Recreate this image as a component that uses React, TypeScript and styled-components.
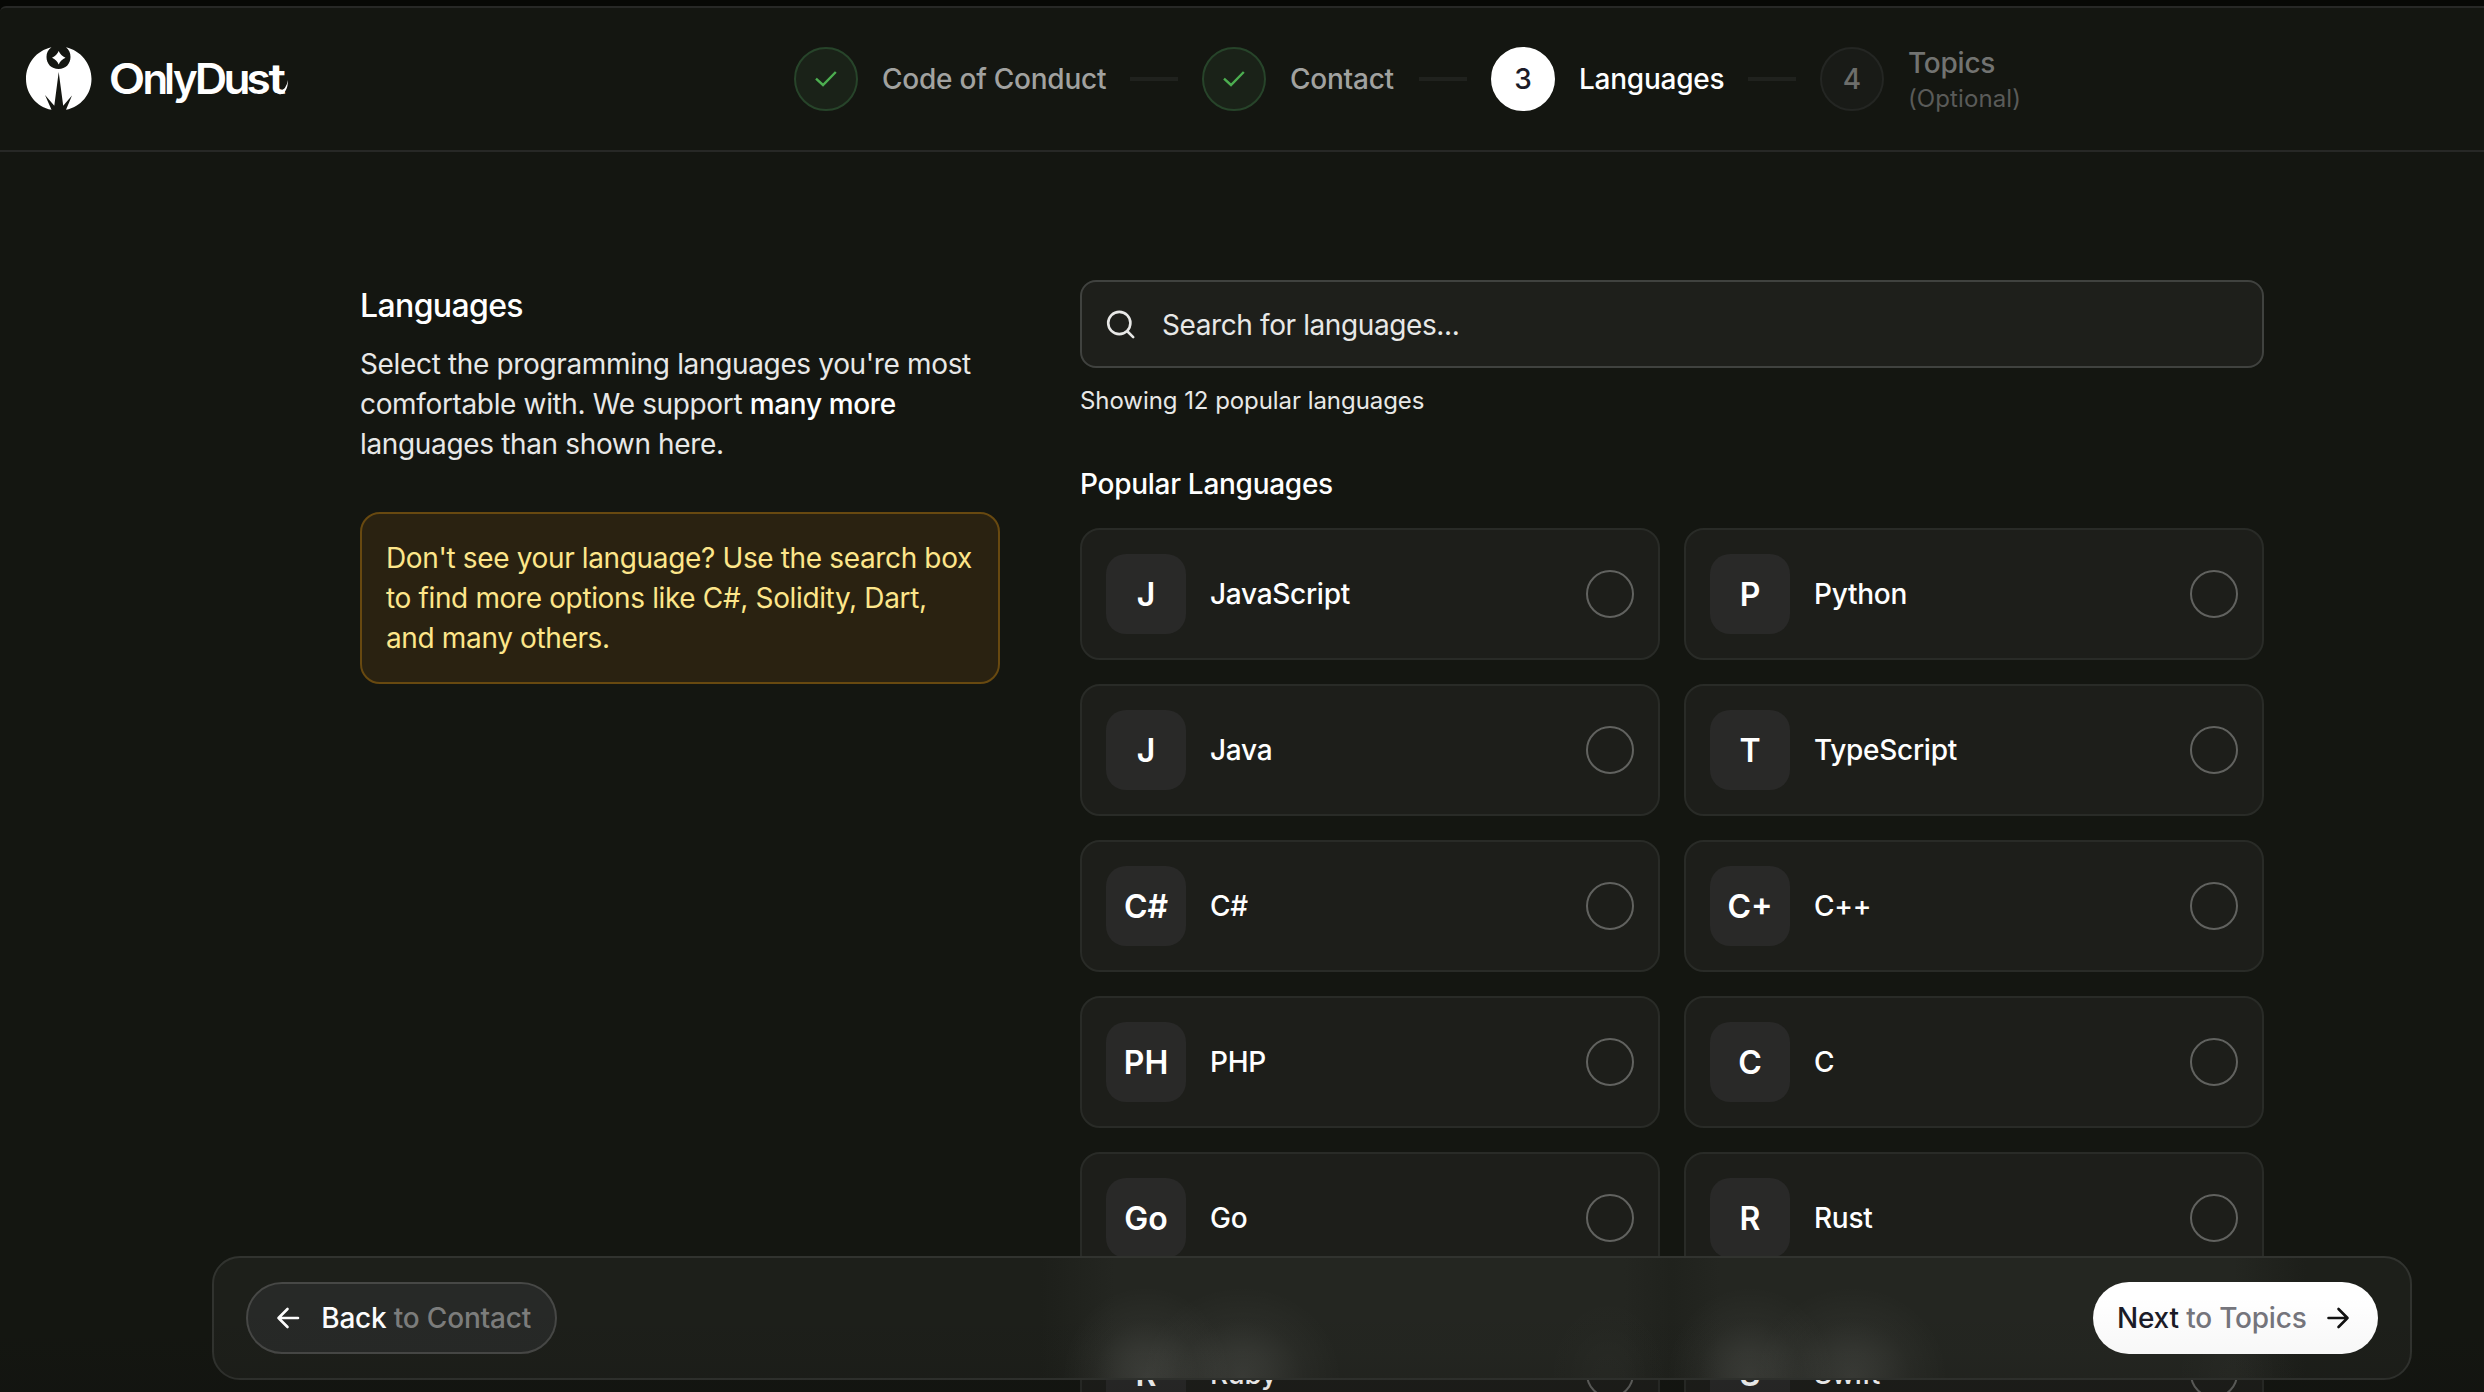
import React from "react";
import styled, { createGlobalStyle } from "styled-components";

const Global = createGlobalStyle`
  *, *::before, *::after { box-sizing: border-box; }
  html, body { margin: 0; background: #070805; }
  body { overflow: hidden; font-family: Inter, "Liberation Sans", sans-serif; color: #fff; -webkit-font-smoothing: antialiased; }
  h1, h2, p { margin: 0; font-weight: 400; }
  button { font: inherit; color: inherit; letter-spacing: inherit; border: 0; background: none; padding: 0; }
`;

const Page = styled.div`
  position: relative;
  width: 2484px;
  height: 1392px;
  padding-top: 6px;
  overflow: hidden;
  background: #070805;
`;

const Shell = styled.div`
  height: 1500px;
  border-top: 2px solid #272826;
  border-top-left-radius: 6px;
  background: #141611;
`;

const Header = styled.header`
  display: flex;
  align-items: center;
  height: 144px;
  padding: 0 24px;
  border-bottom: 2px solid #272826;
`;

const Brand = styled.div`
  width: 770px;
  height: 70px;
  flex: none;
`;

const Stepper = styled.ol`
  display: flex;
  align-items: center;
  gap: 24px;
  margin: 0;
  padding: 0;
  list-style: none;
`;

const Step = styled.li`
  display: flex;
  align-items: center;
  gap: 24px;
`;

type State = "done" | "current" | "todo";
const badge = {
  done: { bg: "#1a2218", border: "#27442a", color: "#4cae50", text: "#a1a2a0" },
  current: { bg: "#fff", border: "#fff", color: "#1b1b27", text: "#fff" },
  todo: { bg: "#191b17", border: "#242623", color: "#6d6e6b", text: "#727371" },
};

const Badge = styled.span<{ $s: State }>`
  display: flex;
  align-items: center;
  justify-content: center;
  width: 64px;
  height: 64px;
  border-radius: 50%;
  border: 2px solid ${(p) => badge[p.$s].border};
  background: ${(p) => badge[p.$s].bg};
  color: ${(p) => badge[p.$s].color};
  font-size: 28px;
  font-weight: 500;
`;

const StepText = styled.span<{ $s: State; $w?: number }>`
  display: flex;
  flex-direction: column;
  width: ${(p) => (p.$w ? p.$w + "px" : "auto")};
  color: ${(p) => badge[p.$s].text};
  font-size: 28px;
  line-height: 40px;
  font-weight: 500;
  letter-spacing: -0.24px;
  white-space: nowrap;
`;

const Optional = styled.small`
  font-size: 24px;
  line-height: 32px;
  padding-bottom: 1px;
  font-weight: 400;
  letter-spacing: 0.1px;
  color: #5a5b59;
`;

const Dash = styled.span`
  width: 48px;
  height: 4px;
  background: #20221e;
`;

const Main = styled.main`
  display: grid;
  grid-template-columns: 640px 1184px;
  column-gap: 80px;
  padding: 128px 360px 0;
`;

const Intro = styled.section`
  padding-top: 4px;
`;

const Title = styled.h1`
  font-size: 32px;
  line-height: 44px;
  font-weight: 500;
  letter-spacing: -0.63px;
`;

const Lead = styled.p`
  margin-top: 16px;
  font-size: 28px;
  line-height: 40px;
  letter-spacing: -0.35px;
  color: #e8e8e7;
  b { font-weight: 500; color: #fff; }
`;

const Tip = styled.p`
  margin-top: 48px;
  padding: 24px;
  border: 2px solid #684910;
  border-radius: 20px;
  background: #2a2211;
  color: #fde68a;
  font-size: 28px;
  line-height: 40px;
  letter-spacing: -0.36px;
`;

const Search = styled.div`
  display: flex;
  align-items: center;
  gap: 26px;
  height: 88px;
  padding: 2px 24px 0;
  border: 2px solid #40423f;
  border-radius: 16px;
  background: #1e1f1b;
  color: #e8e8e7;
  font-size: 28px;
  letter-spacing: -0.4px;
`;

const Count = styled.p`
  margin-top: 17px;
  font-size: 24px;
  line-height: 32px;
  letter-spacing: -0.06px;
  color: #e8e8e7;
`;

const GroupTitle = styled.h2`
  margin-top: 47px;
  font-size: 28px;
  line-height: 40px;
  font-weight: 500;
  letter-spacing: -0.28px;
`;

const Grid = styled.div`
  display: grid;
  grid-template-columns: 1fr 1fr;
  gap: 24px;
  margin-top: 24px;
`;

const Card = styled.button`
  display: flex;
  align-items: center;
  gap: 24px;
  height: 132px;
  padding: 24px;
  border: 2px solid #292b27;
  border-radius: 20px;
  background: #1d1e1a;
  text-align: left;
`;

const Tile = styled.span`
  display: flex;
  align-items: center;
  justify-content: center;
  width: 80px;
  height: 80px;
  border-radius: 20px;
  background: #292928;
  font-size: 32px;
  font-weight: 600;
`;

const Name = styled.span`
  flex: 1;
  font-size: 28px;
  font-weight: 500;
  letter-spacing: -0.28px;
`;

const Radio = styled.span`
  width: 48px;
  height: 48px;
  border: 2px solid #61625f;
  border-radius: 50%;
`;

const glow = (x: number, w: number, alpha: number) =>
  `radial-gradient(${w}px 92px at ${x}px 100%, rgba(255, 255, 250, ${alpha}), rgba(255, 255, 250, ${alpha * 0.72}) 28%, rgba(255, 255, 250, ${alpha * 0.24}) 62%, rgba(255, 255, 250, 0))`;

const Footer = styled.footer`
  position: absolute;
  left: 212px;
  right: 72px;
  bottom: 12px;
  display: flex;
  align-items: center;
  justify-content: space-between;
  height: 124px;
  padding: 0 32px;
  border: 2px solid #31332f;
  border-radius: 28px;
  background:
    ${glow(932, 84, 0.125)},
    ${glow(1028, 100, 0.115)},
    ${glow(1536, 84, 0.115)},
    ${glow(1638, 96, 0.11)},
    ${glow(1394, 70, 0.02)},
    ${glow(2022, 70, 0.02)},
    linear-gradient(to right, #1d1f1a 826px, #242621 900px, #242621 1410px, #20221d 1458px, #242621 1506px, #242621 2020px, #1d1f1a 2092px);
`;

const Action = styled.button<{ $primary?: boolean }>`
  display: flex;
  align-items: center;
  justify-content: space-between;
  width: ${(p) => (p.$primary ? 285 : 311)}px;
  height: 72px;
  padding: ${(p) => (p.$primary ? "0 28px 0 24px" : "0 24px 0 28px")};
  border-radius: 36px;
  border: ${(p) => (p.$primary ? "0" : "2px solid #474846")};
  background: ${(p) => (p.$primary ? "#fff" : "#272927")};
  color: ${(p) => (p.$primary ? "#1b1b27" : "#fff")};
  font-size: 28px;
  font-weight: 500;
  letter-spacing: -0.2px;
  white-space: pre;
  i { font-style: normal; color: ${(p) => (p.$primary ? "#76767d" : "#7d7e7d")}; }
`;

const Shade = styled.div`
  position: absolute;
  inset: auto 0 0 0;
  height: 96px;
  background: linear-gradient(to bottom, rgba(12, 10, 12, 0), rgba(12, 10, 12, 0.03) 60%, rgba(12, 10, 12, 0.13));
  pointer-events: none;
`;

const Logo = () => (
  <svg width="270" height="70" viewBox="24 44 270 70" fill="#fff">
    <path d="M51.500 47.300 C36.500 50.500 26 63.500 26 79 C26 94 36.500 107 51.500 109.800 L45 95 L54.300 105.800 L58.700 72 L63.200 105.800 L72 95.500 L66 109.800 C80.500 107 91.500 94.500 91.500 79 C91.500 63.500 80.500 50.500 66 47.300 C69 49.500 70.500 53 70.500 57 C70.500 64 65.500 69 58.600 69 C51.500 69 46.500 64 46.500 57 C46.500 53 48 49.500 51.500 47.300Z" />
    <path d="M58.700 51 Q60.700 55.700 65.500 57.700 Q60.700 59.700 58.700 64.500 Q56.700 59.700 52 57.700 Q56.700 55.700 58.700 51Z" />
    <text y="94" fontFamily="Inter, sans-serif" fontSize="42" fontWeight="600">
      <tspan x="108.700" textLength="36.500" lengthAdjust="spacingAndGlyphs">O</tspan>
      <tspan x="142.500">n</tspan><tspan x="164">l</tspan><tspan x="173">y</tspan>
      <tspan x="194.800" textLength="32.500" lengthAdjust="spacingAndGlyphs">D</tspan>
      <tspan x="223.500" textLength="27" lengthAdjust="spacingAndGlyphs">u</tspan>
      <tspan x="246.600" textLength="24.300" lengthAdjust="spacingAndGlyphs">s</tspan>
      <tspan x="268.500" textLength="17.500" lengthAdjust="spacingAndGlyphs">t</tspan>
    </text>
    <path d="M279.500 94.500 Q287.800 93.500 288 80 Q286.300 89.500 280 91Z" />
  </svg>
);

const Check = () => (
  <svg width="32" height="32" viewBox="0 0 32 32" fill="none" stroke="currentColor" strokeWidth="2.4">
    <path d="M6 15.700 L13 22 L25.800 9" />
  </svg>
);

const Glass = () => (
  <svg width="30" height="30" viewBox="0 0 30 30" fill="none" stroke="#e8e8e7" strokeWidth="2.6" strokeLinecap="round">
    <circle cx="13.300" cy="13" r="11.100" />
    <path d="M21.500 21.500 L27.200 27.200" />
  </svg>
);

const Arrow = ({ back }: { back?: boolean }) => (
  <svg width="24" height="24" viewBox="0 0 24 24" fill="none" stroke={back ? "#fff" : "#111"} strokeWidth="2.6" strokeLinecap="round" strokeLinejoin="round">
    {back ? <path d="M22 12 H2.500 M11.500 3 L2.500 12 L11.500 21" /> : <path d="M2.500 12 H21.500 M12.500 3 L21.500 12 L12.500 21" />}
  </svg>
);

const languages = [
  ["J", "JavaScript"], ["P", "Python"],
  ["J", "Java"], ["T", "TypeScript"],
  ["C#", "C#"], ["C+", "C++"],
  ["PH", "PHP"], ["C", "C"],
  ["Go", "Go"], ["R", "Rust"],
  ["R", "Ruby"], ["S", "Swift"],
];

export default function App() {
  return (
    <Page>
      <Global />
      <Shell>
        <Header>
          <Brand><Logo /></Brand>
          <Stepper>
            <Step><Badge $s="done"><Check /></Badge><StepText $s="done" $w={224}>Code of Conduct</StepText></Step>
            <Dash />
            <Step><Badge $s="done"><Check /></Badge><StepText $s="done" $w={105}>Contact</StepText></Step>
            <Dash />
            <Step><Badge $s="current">3</Badge><StepText $s="current" $w={145}>Languages</StepText></Step>
            <Dash />
            <Step><Badge $s="todo">4</Badge><StepText $s="todo">Topics<Optional>(Optional)</Optional></StepText></Step>
          </Stepper>
        </Header>
        <Main>
          <Intro>
            <Title>Languages</Title>
            <Lead>Select the programming languages you're most comfortable with. We support <b>many more</b> languages than shown here.</Lead>
            <Tip>Don't see your language? Use the search box to find more options like C#, Solidity, Dart, and many others.</Tip>
          </Intro>
          <section>
            <Search><Glass />Search for languages...</Search>
            <Count>Showing 12 popular languages</Count>
            <GroupTitle>Popular Languages</GroupTitle>
            <Grid>
              {languages.map(([tile, name]) => (
                <Card key={name}><Tile>{tile}</Tile><Name>{name}</Name><Radio /></Card>
              ))}
            </Grid>
          </section>
        </Main>
      </Shell>
      <Footer>
        <Action><Arrow back /><span>Back <i>to Contact</i></span></Action>
        <Action $primary><span>Next <i>to Topics</i></span><Arrow /></Action>
      </Footer>
      <Shade />
    </Page>
  );
}
